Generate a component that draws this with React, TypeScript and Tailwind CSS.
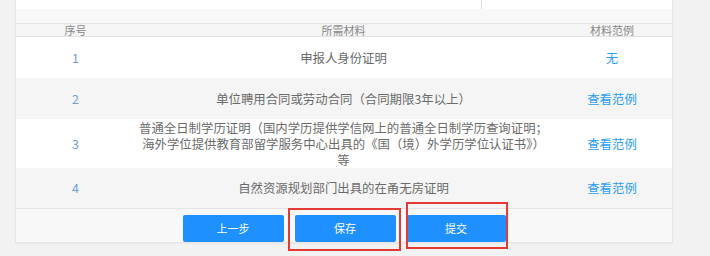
const rows = [
    { no: "1", lines: ["申报人身份证明"], link: "无", h: "h-[41px]", bg: "bg-white" },
    {
        no: "2",
        lines: ["单位聘用合同或劳动合同（合同期限3年以上）"],
        link: "查看范例",
        h: "h-[41px]",
        bg: "bg-[#f5f5f5]",
    },
    {
        no: "3",
        lines: [
            "普通全日制学历证明（国内学历提供学信网上的普通全日制学历查询证明；",
            "海外学位提供教育部留学服务中心出具的《国（境）外学历学位认证书》）",
            "等",
        ],
        link: "查看范例",
        h: "h-[49px]",
        bg: "bg-white",
    },
    {
        no: "4",
        lines: ["自然资源规划部门出具的在甬无房证明"],
        link: "查看范例",
        h: "h-[40px]",
        bg: "bg-[#f5f5f5]",
    },
];

const App = () => {
    return (
        <div className="relative w-[710px] h-[256px] overflow-hidden bg-[#f2f2f2] font-['Noto_Sans_CJK_SC','Noto_Sans',sans-serif]">
            <div className="ml-[15px] w-[658px] h-[243px] bg-[#f8f8f8] border-x border-b border-[#e6e6e6] shadow-[0_1px_2px_rgba(0,0,0,0.04)] flex flex-col">
                <div className="flex h-[9px]">
                    <div className="w-[466px] bg-white border-r border-[#dcdcdc]" />
                    <div className="flex-1 bg-white" />
                </div>
                <div className="h-[14px]" />
                <div className="border-y border-[#e3e3e3]">
                    <div className="grid grid-cols-[119px_417px_120px] h-[13px] bg-[#f5f5f5] text-[11px] leading-[13px] text-[#888] text-center border-b border-[#e3e3e3]">
                        <div>序号</div>
                        <div>所需材料</div>
                        <div>材料范例</div>
                    </div>
                    {rows.map((row) => (
                        <div
                            key={row.no}
                            className={`grid grid-cols-[119px_417px_120px] items-center ${row.h} ${row.bg} text-[12.4px] leading-[16px] text-center`}
                        >
                            <div className="text-[#6e9ed8]">{row.no}</div>
                            <div className="text-[#6b6b6b] whitespace-nowrap">
                                {row.lines.map((line) => (
                                    <div key={line}>{line}</div>
                                ))}
                            </div>
                            <div className="text-[#2a9df4]">{row.link}</div>
                        </div>
                    ))}
                </div>
                <div className="flex-1 flex items-end justify-center gap-[11px]">
                    <button className="w-[101px] h-[27px] rounded-[2px] bg-[#1e90ff] text-white text-[11px]">
                        上一步
                    </button>
                    <button className="w-[101px] h-[27px] rounded-[2px] bg-[#1e90ff] text-white text-[11px]">
                        保存
                    </button>
                    <button className="w-[99px] h-[27px] rounded-[2px] bg-[#1e90ff] text-white text-[11px]">
                        提交
                    </button>
                </div>
            </div>
            <div className="absolute left-[288px] top-[208px] w-[113px] h-[43px] border-2 border-[#e53935]" />
            <div className="absolute left-[406px] top-[202px] w-[102px] h-[47px] border-2 border-[#e53935]" />
        </div>
    );
};

export default App;
